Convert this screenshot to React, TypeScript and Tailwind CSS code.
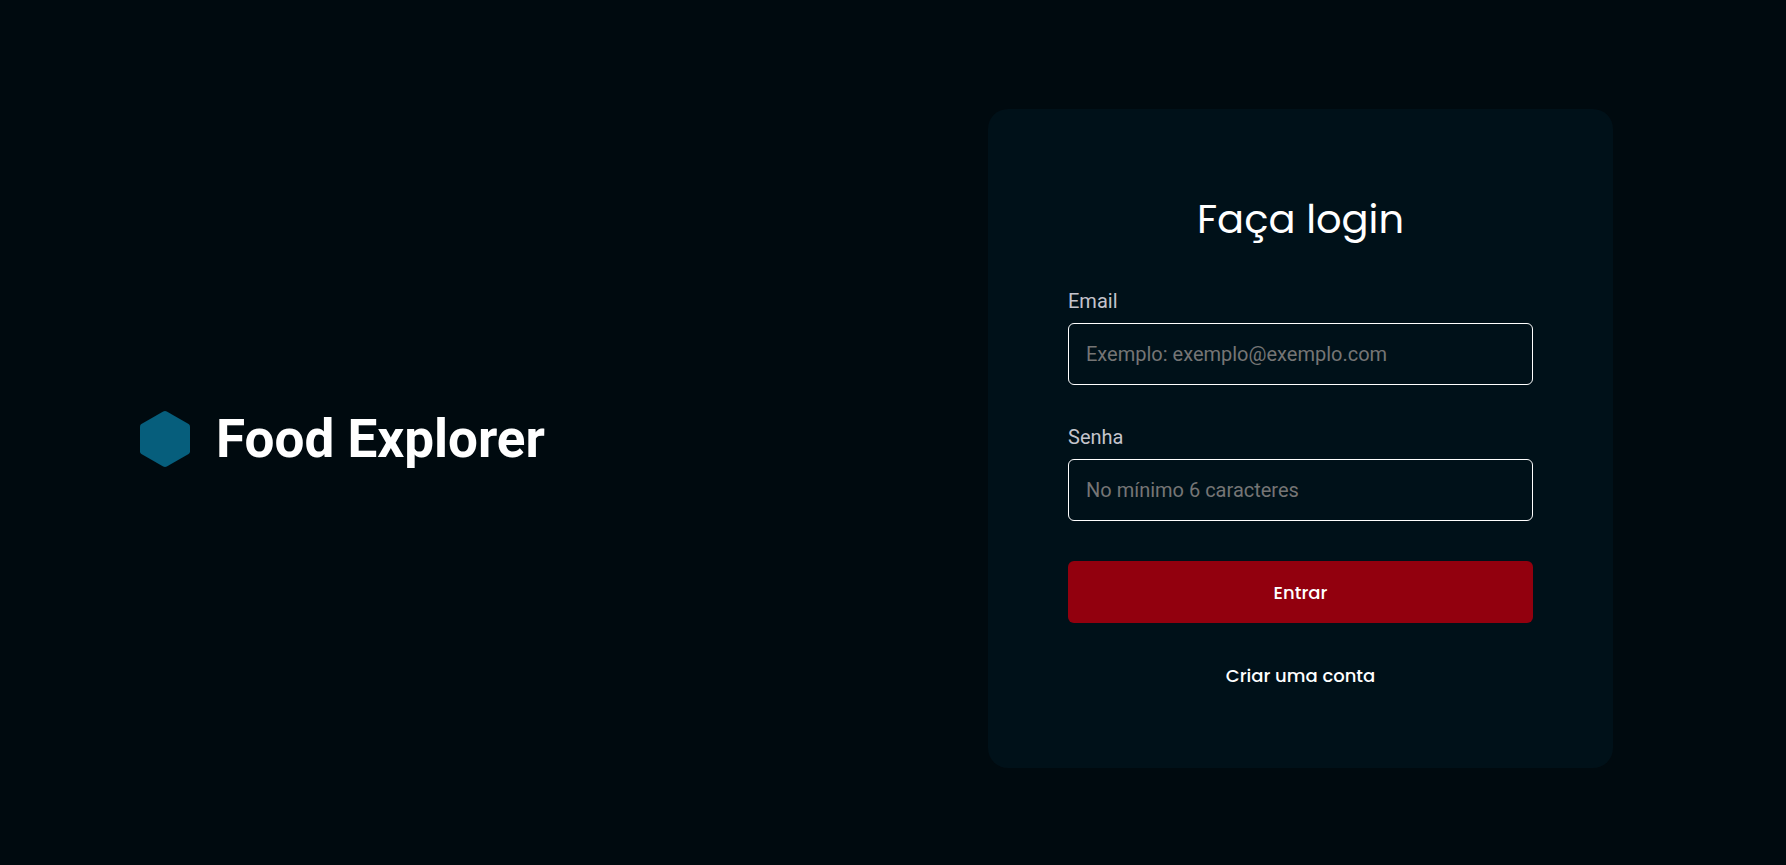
import React from "react";

type FieldProps = {
  id: string;
  label: string;
  type: string;
  placeholder: string;
};

function Field({ id, label, type, placeholder }: FieldProps) {
  return (
    <div className="flex flex-col gap-2.5">
      <label htmlFor={id} className="text-xl leading-6 text-[#c4c4cc]">
        {label}
      </label>
      <input
        id={id}
        type={type}
        placeholder={placeholder}
        className="h-[62px] w-full rounded-md border border-white bg-transparent px-[17px] text-xl text-white placeholder:text-[#757575]"
      />
    </div>
  );
}

function Brand() {
  return (
    <div className="flex items-center gap-[26px]">
      <svg viewBox="0 0 50 56" className="h-14 w-[50px] shrink-0" aria-hidden="true">
        <path
          d="M23.2 0.5Q25 -0.4 26.8 0.5L48.6 13.1Q50 14 50 15.6V40.4Q50 42 48.6 42.9L26.8 55.5Q25 56.4 23.2 55.5L1.4 42.9Q0 42 0 40.4V15.6Q0 14 1.4 13.1Z"
          fill="#065e7c"
        />
      </svg>
      <span className="text-[53px] leading-16 font-bold text-white">Food Explorer</span>
    </div>
  );
}

export default function App() {
  return (
    <main className="flex min-h-screen items-center justify-between gap-10 bg-[#000a0f] pt-3 pr-[173px] pl-[140px] font-['Roboto',sans-serif]">
      <Brand />
      <form
        className="flex w-[625px] flex-col gap-10 rounded-[20px] bg-[#001119] p-20"
        onSubmit={(event) => event.preventDefault()}
      >
        <h1 className="text-center font-['Poppins','Inter',sans-serif] text-[40px] leading-[60px] font-normal text-white">
          Faça login
        </h1>
        <Field id="email" label="Email" type="email" placeholder="Exemplo: exemplo@exemplo.com" />
        <Field id="password" label="Senha" type="password" placeholder="No mínimo 6 caracteres" />
        <button
          type="submit"
          className="h-[62px] cursor-pointer rounded-md bg-[#92000e] font-['Poppins','Inter',sans-serif] text-[18px] font-medium text-white"
        >
          Entrar
        </button>
        <a
          href="#criar-conta"
          className="self-center font-['Poppins','Inter',sans-serif] text-[18px] leading-[25px] font-medium text-white"
        >
          Criar uma conta
        </a>
      </form>
    </main>
  );
}
